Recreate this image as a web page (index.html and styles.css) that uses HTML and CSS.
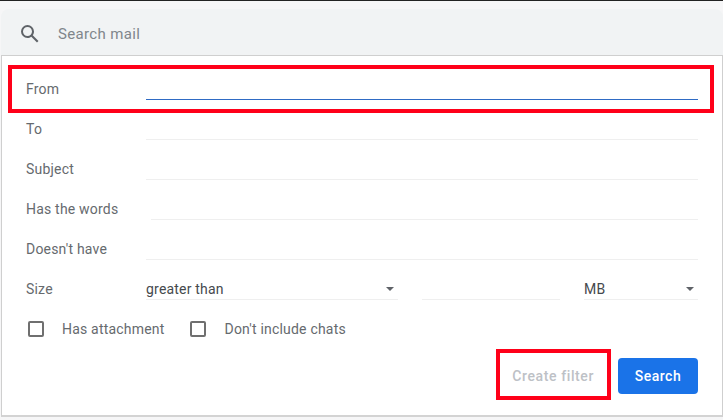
FILE: index.html
```html
<!DOCTYPE html>
<html lang="en">
<head>
<meta charset="utf-8">
<title>Search mail</title>
<link rel="stylesheet" href="styles.css">
</head>
<body>
<div class="topline"></div>
<div class="app">
  <div class="searchbar">
    <svg class="search-icon" width="24" height="24" viewBox="0 0 24 24"><path fill="#5f6368" d="M20.49 19l-5.73-5.73C15.53 12.2 16 10.91 16 9.5A6.5 6.5 0 1 0 9.5 16c1.41 0 2.7-.47 3.77-1.24L19 20.49 20.49 19zM5 9.5C5 7.01 7.01 5 9.5 5S14 7.01 14 9.5 11.99 14 9.5 14 5 11.99 5 9.5z"/></svg>
    <span class="placeholder">Search mail</span>
  </div>
  <div class="panel">
    <div class="row"><span class="label">From</span><div class="field active"></div></div>
    <div class="row"><span class="label">To</span><div class="field"></div></div>
    <div class="row"><span class="label">Subject</span><div class="field"></div></div>
    <div class="row"><span class="label">Has the words</span><div class="field inset"></div></div>
    <div class="row"><span class="label">Doesn't have</span><div class="field"></div></div>
    <div class="row">
      <span class="label">Size</span>
      <div class="size">
        <div class="field select wide">greater than<i class="caret"></i></div>
        <div class="field number"></div>
        <div class="field select unit">MB<i class="caret"></i></div>
      </div>
    </div>
    <div class="checks">
      <span class="box"></span><span class="check-label first">Has attachment</span>
      <span class="box"></span><span class="check-label">Don't include chats</span>
    </div>
    <div class="actions">
      <span class="create">Create filter</span>
      <span class="search-btn">Search</span>
    </div>
  </div>
</div>
<div class="mark mark-from"></div>
<div class="mark mark-create"></div>
</body>
</html>
```
FILE: styles.css
```css
* { box-sizing: border-box; }
html, body { margin: 0; height: 100%; }
body {
  position: relative;
  width: 723px;
  height: 420px;
  overflow: hidden;
  background: #f6f6f7;
  font-family: Roboto, "Liberation Sans", sans-serif;
  font-size: 14px;
  letter-spacing: 0.2px;
  color: #666a6e;
}
.topline { height: 1px; background: #222; }
.app { padding: 8px 0 0 1px; }
.searchbar {
  display: flex;
  align-items: center;
  height: 46px;
  padding-top: 4px;
  background: #f1f3f4;
  border-radius: 8px 8px 0 0;
}
.search-icon { margin-left: 17px; flex: none; }
.placeholder { margin-left: 16px; font-size: 15px; color: #80868b; letter-spacing: 0.35px; }
.panel {
  height: 362px;
  width: 722px;
  padding: 13px 24px 0 24px;
  background: #fff;
  border: 1px solid #cfcfcf;
  border-bottom: 2px solid #d3d3d3;
}
.row { display: flex; height: 40px; }
.label { width: 120px; flex: none; line-height: 40px; height: 40px; }
.field { flex: 1; height: 31px; border-bottom: 1px solid #efefef; }
.field.active { border-bottom-color: #2f6bc4; }
.field.inset { margin-left: 5px; }
.size { flex: 1; display: flex; gap: 24px; }
.select { position: relative; line-height: 40px; color: #45494d; }
.wide { flex: none; width: 252px; }
.number { flex: none; width: 138px; }
.unit { flex: none; width: 114px; }
.caret {
  position: absolute;
  right: 4px;
  top: 18px;
  border: 4.5px solid transparent;
  border-top-color: #5f6368;
  border-bottom-width: 0;
}
.checks { display: flex; align-items: center; height: 40px; }
.box {
  width: 16px; height: 16px;
  margin-left: 2px;
  border: 2px solid #6f6f6f;
  border-radius: 2px;
  flex: none;
}
.check-label { margin-left: 18px; }
.check-label.first { margin-right: 23px; }
.check-label.first + .box + .check-label { margin-left: 19px; }
.actions { display: flex; justify-content: flex-end; align-items: center; gap: 24px; height: 36px; margin-top: 9px; }
.create { color: #bdc1c6; font-weight: 500; letter-spacing: 0.6px; }
.search-btn {
  display: flex; align-items: center; justify-content: center;
  width: 80px; height: 36px;
  background: #1a73e8;
  border-radius: 4px;
  color: #fff;
  font-weight: 500;
  letter-spacing: 0.5px;
}
.mark { position: absolute; border: 4px solid #ff0019; }
.mark-from { left: 8px; top: 65px; width: 706px; height: 48px; }
.mark-create { left: 496px; top: 349px; width: 115px; height: 51px; }
```
